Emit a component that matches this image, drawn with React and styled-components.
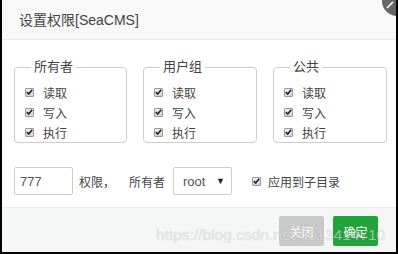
import React from 'react'
import styled, { createGlobalStyle } from 'styled-components'

const GlobalStyle = createGlobalStyle`
  html, body {
    margin: 0;
    padding: 0;
    background: #fff;
  }
  body {
    font-family: "Liberation Sans", "Noto Sans CJK SC", sans-serif;
  }
`

const Frame = styled.div`
  position: relative;
  box-sizing: border-box;
  width: 398px;
  height: 254px;
  border-left: 2px solid #000;
  border-right: 2px solid #000;
  border-bottom: 2px solid #000;
  background: #fff;
  overflow: hidden;
  display: flex;
  flex-direction: column;
  color: #444;
`

const Header = styled.div`
  height: 40px;
  flex: none;
  box-sizing: border-box;
  background: #f8f8f8;
  border-bottom: 1px solid #eaeaea;
  display: flex;
  align-items: center;
  padding: 0 0 2px 17px;
  font-size: 14px;
  color: #444;
`

const CloseBadge = styled.div`
  position: absolute;
  top: -14px;
  right: -16px;
  width: 30px;
  height: 30px;
  border-radius: 50%;
  background: #666;
  svg {
    position: absolute;
    left: 4px;
    top: 15px;
  }
`

const Body = styled.div`
  flex: 1;
  display: flex;
  flex-direction: column;
  padding: 20px 10px 0 12px;
`

const Groups = styled.div`
  display: grid;
  grid-template-columns: 113px 114px 114px;
  column-gap: 16px;
  align-items: start;
`

const Group = styled.fieldset`
  margin: 0;
  padding: 8px 0 0 10px;
  border: 1px solid #ccc;
  border-radius: 4px;
  min-width: 0;
`

const Legend = styled.legend`
  margin-left: 6px;
  padding: 0 3px;
  font-size: 13px;
  line-height: 14px;
  color: #444;
`

const CheckRow = styled.label`
  display: flex;
  align-items: center;
  height: 20px;
  font-size: 12px;
  color: #444;
`

const Box = styled.span`
  box-sizing: border-box;
  width: 9px;
  height: 9px;
  border: 1px solid #999;
  border-radius: 1px;
  background: linear-gradient(#eee, #d4d4d4);
  margin-right: ${props => props.gap || 9}px;
  display: flex;
  align-items: center;
  justify-content: center;
  flex: none;
`

const Options = styled.div`
  display: flex;
  align-items: center;
  margin-top: 24px;
  font-size: 12px;
  color: #444;
`

const NumberInput = styled.div`
  box-sizing: border-box;
  width: 59px;
  height: 28px;
  border: 1px solid #ccc;
  border-radius: 2px;
  display: flex;
  align-items: center;
  padding-left: 5px;
  font-size: 13px;
  color: #555;
`

const Text = styled.span`
  margin-left: ${props => props.left || 0}px;
`

const Select = styled.div`
  box-sizing: border-box;
  width: 59px;
  height: 28px;
  margin-left: 8px;
  border: 1px solid #ccc;
  border-radius: 2px;
  display: flex;
  align-items: center;
  justify-content: space-between;
  padding: 0 6px 0 9px;
  font-size: 13px;
  color: #555;
`

const Arrow = styled.span`
  font-size: 9px;
  color: #222;
`

const Apply = styled.label`
  display: flex;
  align-items: center;
  margin-left: 20px;
`

const Footer = styled.div`
  flex: 1;
  box-sizing: border-box;
  background: #f5f6f6;
  border-top: 1px solid #eaeaea;
  display: flex;
  justify-content: flex-end;
  align-items: flex-start;
  padding: 8px 18px 0 0;
  gap: 9px;
  margin-top: 12px;
`

const Button = styled.div`
  box-sizing: border-box;
  width: 45px;
  height: 30px;
  border-radius: 2px;
  display: flex;
  align-items: center;
  justify-content: center;
  font-size: 12px;
  color: #fff;
  background: ${props => (props.primary ? '#23a43b' : '#c9c9c9')};
`

const Watermark = styled.div`
  position: absolute;
  left: 154px;
  top: 226px;
  font-family: "Liberation Sans", Arial, sans-serif;
  font-size: 15.5px;
  color: rgba(255, 255, 255, 0.55);
  text-shadow: 0 0 1px rgba(0, 0, 0, 0.22);
  white-space: nowrap;
  pointer-events: none;
`

const Tick = () => (
  <svg width="7" height="6" viewBox="0 0 7 6">
    <path d="M0.8 3.2 L2.7 5 L6.2 0.8" fill="none" stroke="#222" strokeWidth="1.6" />
  </svg>
)

const Check = ({ children }) => (
  <CheckRow>
    <Box>
      <Tick />
    </Box>
    {children}
  </CheckRow>
)

const groups = ['所有者', '用户组', '公共']

export default function App() {
  return (
    <>
      <GlobalStyle />
      <Frame>
        <Header>设置权限[SeaCMS]</Header>
        <CloseBadge>
          <svg width="8" height="8" viewBox="0 0 8 8">
            <path d="M1 7 L7 1" stroke="#fff" strokeWidth="1.6" />
          </svg>
        </CloseBadge>
        <Body>
          <Groups>
            {groups.map(name => (
              <Group key={name}>
                <Legend>{name}</Legend>
                <Check>读取</Check>
                <Check>写入</Check>
                <Check>执行</Check>
              </Group>
            ))}
          </Groups>
          <Options>
            <NumberInput>777</NumberInput>
            <Text left={6}>权限，</Text>
            <Text left={14}>所有者</Text>
            <Select>
              root
              <Arrow>▼</Arrow>
            </Select>
            <Apply>
              <Box gap={7}>
                <Tick />
              </Box>
              应用到子目录
            </Apply>
          </Options>
        </Body>
        <Footer>
          <Button>关闭</Button>
          <Button primary>确定</Button>
        </Footer>
        <Watermark>https://blog.csdn.net/u013414710</Watermark>
      </Frame>
    </>
  )
}
